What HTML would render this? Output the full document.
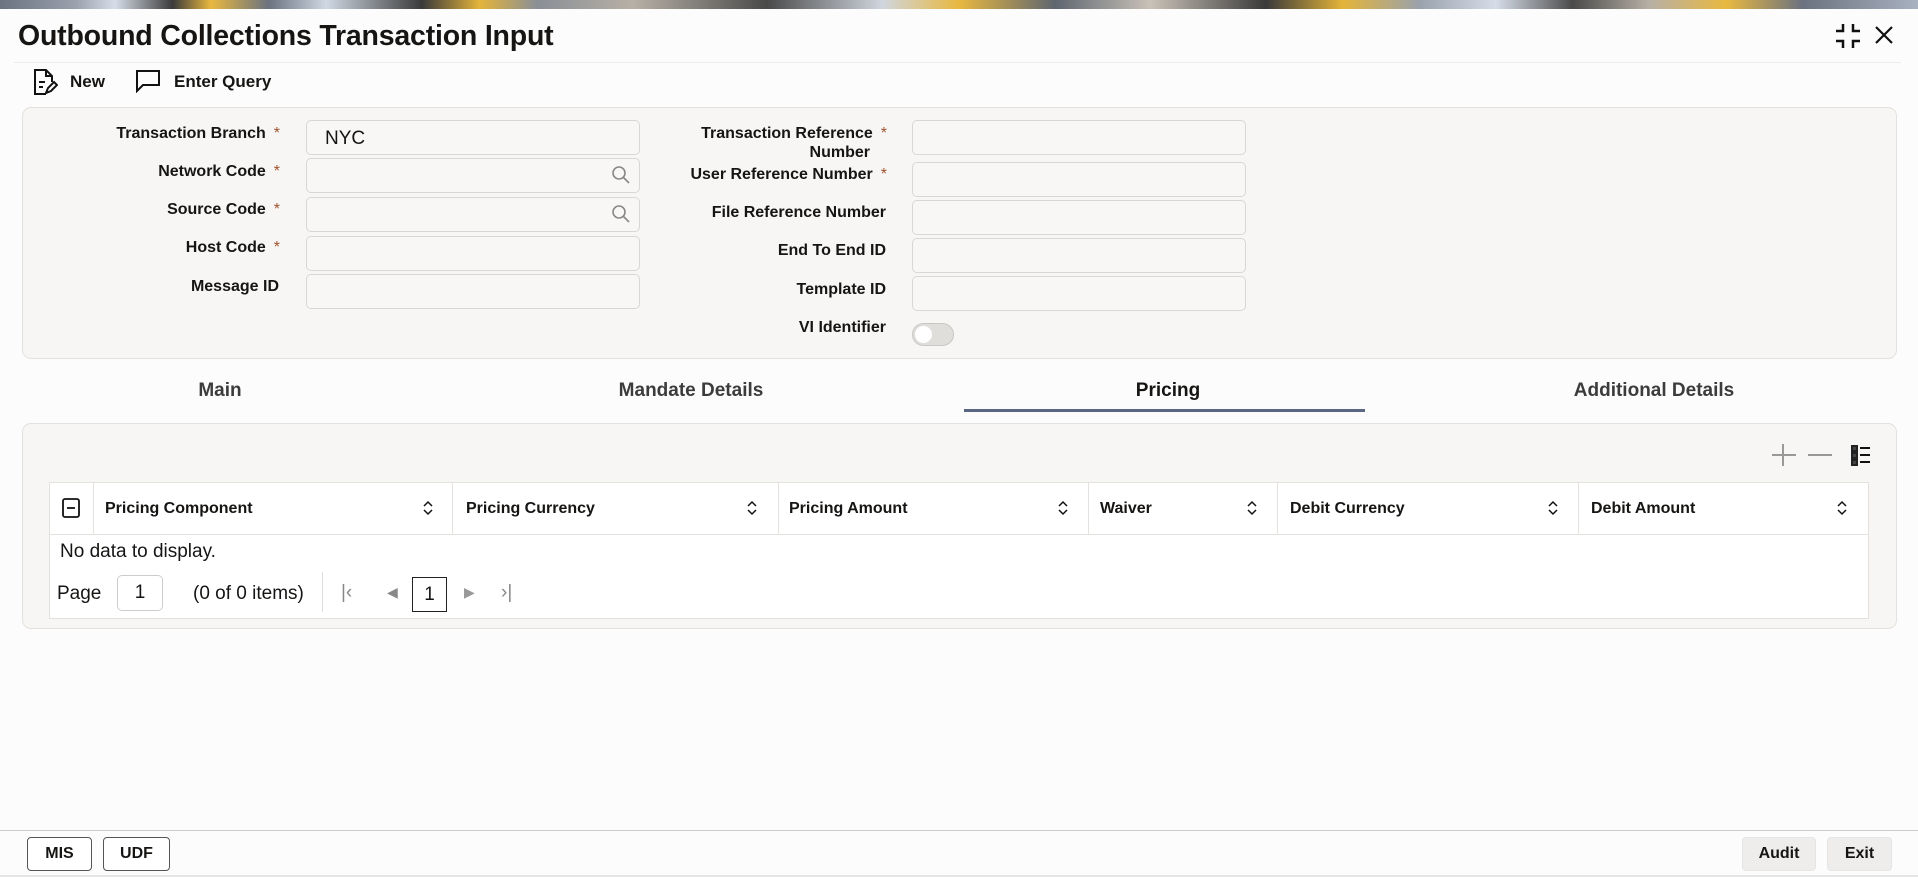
<!DOCTYPE html>
<html><head><meta charset="utf-8">
<style>
*{box-sizing:border-box;margin:0;padding:0}
body{width:1918px;height:877px;overflow:hidden;background:#fcfcfc;font-family:"Liberation Sans",sans-serif;color:#161513;position:relative}
.abs{position:absolute}
.banner{left:0;top:0;width:1918px;height:9px;background:linear-gradient(90deg,#6b7280 0%,#9ca3af 4%,#d6dde8 6%,#3b3b3b 9%,#e8b840 11%,#6b7280 14%,#cfd8e3 17%,#3a3a3a 22%,#e4b43a 25%,#8a8f96 28%,#b7b0a6 33%,#4a4a4a 40%,#d0d6de 46%,#e8b840 50%,#5f6670 55%,#c9c2b8 60%,#3a3a3a 66%,#e4b43a 70%,#9aa2ad 74%,#d6dde8 78%,#4a4a4a 82%,#b7b0a6 86%,#e8b840 90%,#6b7280 94%,#a9b2c0 100%)}
h1{position:absolute;left:18px;top:20px;font-size:28.5px;font-weight:bold;letter-spacing:-0.2px}
.lbl{position:absolute;font-size:16px;font-weight:bold;text-align:right;color:#161513}
.ast{color:#a0522d;font-weight:normal;margin-left:8px}
.inp{position:absolute;height:35px;background:#f8f7f5;border:1px solid #d9d7d3;border-radius:5px}
.panel{position:absolute;background:#f7f6f4;border:1px solid #e4e2de;border-radius:9px}
.tab{position:absolute;top:380px;font-size:19px;font-weight:bold;color:#3c3c3c;transform:translateX(-50%)}
.th{position:absolute;top:482px;height:52px;font-size:16px;font-weight:bold;padding-top:18px;border-left:1px solid #e4e2de}
.btn{position:absolute;top:837px;height:34px;border:1px solid #555;border-radius:4px;font-size:16px;font-weight:bold;text-align:center;line-height:32px;background:#fff}
</style></head><body>
<div class="abs banner"></div>
<h1>Outbound Collections Transaction Input</h1>
<svg class="abs" style="left:1834px;top:22px" width="28" height="28" viewBox="0 0 28 28" fill="none" stroke="#111" stroke-width="2.5"><path d="M2 9h7V2M19 2v7h7M2 19h7v7M19 26v-7h7"/></svg>
<svg class="abs" style="left:1874px;top:25px" width="20" height="20" viewBox="0 0 20 20" stroke="#111" stroke-width="2.2"><path d="M2 2L18 18M18 2L2 18"/></svg>
<div class="abs" style="left:14px;top:62px;width:1887px;height:1px;background:#ececec"></div>
<svg class="abs" style="left:32px;top:68px" width="26" height="28" viewBox="0 0 26 28" fill="none" stroke="#111" stroke-width="2"><path d="M14 26H3V2h11l6 6v6M14 2v6h6M7 14h6M7 19h4"/><path d="M14 25l2-5 6-6 3 3-6 6z"/></svg>
<div class="abs" style="left:70px;top:72px;font-size:17px;font-weight:bold">New</div>
<svg class="abs" style="left:135px;top:69px" width="26" height="24" viewBox="0 0 26 24" fill="none" stroke="#111" stroke-width="2"><path d="M2 2h22v14H8l-6 6z"/></svg>
<div class="abs" style="left:174px;top:72px;font-size:17px;font-weight:bold">Enter Query</div>

<div class="panel" style="left:22px;top:107px;width:1875px;height:252px"></div>
<div class="lbl" style="left:60px;width:220px;top:125px">Transaction Branch<span class="ast">*</span></div>
<div class="lbl" style="left:60px;width:220px;top:163px">Network Code<span class="ast">*</span></div>
<div class="lbl" style="left:60px;width:220px;top:201px">Source Code<span class="ast">*</span></div>
<div class="lbl" style="left:60px;width:220px;top:239px">Host Code<span class="ast">*</span></div>
<div class="lbl" style="left:60px;width:219px;top:278px">Message ID</div>
<div class="inp" style="left:306px;top:120px;width:334px"></div>
<div class="abs" style="left:325px;top:128px;font-size:19px">NYC</div>
<div class="inp" style="left:306px;top:158px;width:334px"></div>
<div class="inp" style="left:306px;top:197px;width:334px"></div>
<div class="inp" style="left:306px;top:236px;width:334px"></div>
<div class="inp" style="left:306px;top:274px;width:334px"></div>
<svg class="abs" style="left:611px;top:165px" width="20" height="20" viewBox="0 0 20 20" fill="none" stroke="#888" stroke-width="1.6"><circle cx="8" cy="8" r="6"/><path d="M12.5 12.5L18 18"/></svg>
<svg class="abs" style="left:611px;top:204px" width="20" height="20" viewBox="0 0 20 20" fill="none" stroke="#888" stroke-width="1.6"><circle cx="8" cy="8" r="6"/><path d="M12.5 12.5L18 18"/></svg>

<div class="lbl" style="left:640px;width:247px;top:124px;line-height:19px">Transaction Reference<span class="ast">*</span><br><span style="margin-right:17px">Number</span></div>
<div class="lbl" style="left:640px;width:247px;top:166px">User Reference Number<span class="ast">*</span></div>
<div class="lbl" style="left:640px;width:246px;top:204px">File Reference Number</div>
<div class="lbl" style="left:640px;width:246px;top:242px">End To End ID</div>
<div class="lbl" style="left:640px;width:246px;top:281px">Template ID</div>
<div class="lbl" style="left:640px;width:246px;top:319px">VI Identifier</div>
<div class="inp" style="left:912px;top:120px;width:334px"></div>
<div class="inp" style="left:912px;top:162px;width:334px"></div>
<div class="inp" style="left:912px;top:200px;width:334px"></div>
<div class="inp" style="left:912px;top:238px;width:334px"></div>
<div class="inp" style="left:912px;top:276px;width:334px"></div>
<div class="abs" style="left:912px;top:323px;width:42px;height:23px;border-radius:12px;background:#e0dedb;border:1px solid #c9c7c3"><div style="position:absolute;left:2px;top:2px;width:17px;height:17px;border-radius:50%;background:#fff"></div></div>

<div class="tab" style="left:220px">Main</div>
<div class="tab" style="left:691px">Mandate Details</div>
<div class="tab" style="left:1168px;color:#161513">Pricing</div>
<div class="tab" style="left:1654px">Additional Details</div>
<div class="abs" style="left:964px;top:409px;width:401px;height:3px;background:#5b6683"></div>

<div class="panel" style="left:22px;top:423px;width:1875px;height:206px"></div>
<svg class="abs" style="left:1770px;top:443px" width="100" height="24" viewBox="0 0 100 24" fill="none" stroke-width="2"><path d="M13 1v22M2 12h24M38 12h24" stroke="#999"/><rect x="82" y="3" width="5" height="5" stroke="#222" fill="#444"/><rect x="82" y="10" width="5" height="5" stroke="#222" fill="#444"/><rect x="82" y="17" width="5" height="5" stroke="#222" fill="#444"/><path d="M90 5h10M90 12h10M90 19h10" stroke="#111"/></svg>
<div class="abs" style="left:49px;top:482px;width:1820px;height:137px;background:#fff;border:1px solid #e4e2de"></div>
<div class="abs" style="left:49px;top:534px;width:1820px;height:1px;background:#e4e2de"></div>
<svg class="abs" style="left:62px;top:498px" width="18" height="20" viewBox="0 0 18 20" fill="none" stroke="#111" stroke-width="1.8"><rect x="1" y="1" width="16" height="18" rx="2"/><path d="M5 10h8"/></svg>
<div class="th" style="left:93px;width:359px;padding-left:11px">Pricing Component</div>
<div class="th" style="left:452px;width:326px;padding-left:13px">Pricing Currency</div>
<div class="th" style="left:778px;width:310px;padding-left:10px">Pricing Amount</div>
<div class="th" style="left:1088px;width:189px;padding-left:11px">Waiver</div>
<div class="th" style="left:1277px;width:301px;padding-left:12px">Debit Currency</div>
<div class="th" style="left:1578px;width:291px;padding-left:12px">Debit Amount</div>
<svg class="abs" style="left:423px;top:500px" width="10" height="16" viewBox="0 0 10 16" fill="none" stroke="#111" stroke-width="1.5"><path d="M1 6l4-4 4 4M1 10l4 4 4-4"/></svg>
<svg class="abs" style="left:747px;top:500px" width="10" height="16" viewBox="0 0 10 16" fill="none" stroke="#111" stroke-width="1.5"><path d="M1 6l4-4 4 4M1 10l4 4 4-4"/></svg>
<svg class="abs" style="left:1058px;top:500px" width="10" height="16" viewBox="0 0 10 16" fill="none" stroke="#111" stroke-width="1.5"><path d="M1 6l4-4 4 4M1 10l4 4 4-4"/></svg>
<svg class="abs" style="left:1247px;top:500px" width="10" height="16" viewBox="0 0 10 16" fill="none" stroke="#111" stroke-width="1.5"><path d="M1 6l4-4 4 4M1 10l4 4 4-4"/></svg>
<svg class="abs" style="left:1548px;top:500px" width="10" height="16" viewBox="0 0 10 16" fill="none" stroke="#111" stroke-width="1.5"><path d="M1 6l4-4 4 4M1 10l4 4 4-4"/></svg>
<svg class="abs" style="left:1837px;top:500px" width="10" height="16" viewBox="0 0 10 16" fill="none" stroke="#111" stroke-width="1.5"><path d="M1 6l4-4 4 4M1 10l4 4 4-4"/></svg>
<div class="abs" style="left:60px;top:541px;font-size:19px">No data to display.</div>
<div class="abs" style="left:57px;top:583px;font-size:19px">Page</div>
<div class="abs" style="left:117px;top:575px;width:46px;height:36px;border:1px solid #ccc;border-radius:5px;font-size:19px;text-align:center;line-height:34px;background:#fff">1</div>
<div class="abs" style="left:193px;top:583px;font-size:19px">(0 of 0 items)</div>
<div class="abs" style="left:322px;top:572px;width:1px;height:40px;background:#ddd"></div>
<div class="abs" style="left:341px;top:582px;font-size:19px;color:#888">|&lsaquo;</div>
<div class="abs" style="left:387px;top:584px;font-size:14px;color:#888">&#9664;</div>
<div class="abs" style="left:412px;top:577px;width:35px;height:35px;border:1.5px solid #222;font-size:19px;text-align:center;line-height:33px">1</div>
<div class="abs" style="left:464px;top:584px;font-size:14px;color:#999">&#9654;</div>
<div class="abs" style="left:501px;top:582px;font-size:19px;color:#888">&rsaquo;|</div>

<div class="abs" style="left:0;top:830px;width:1918px;height:1px;background:#ccc"></div>
<div class="abs" style="left:0;top:875px;width:1918px;height:2px;background:#e5e5e5"></div>
<div class="btn" style="left:27px;width:65px">MIS</div>
<div class="btn" style="left:103px;width:67px">UDF</div>
<div class="btn" style="left:1742px;width:74px;border-color:#e5e5e5;background:#eeedeb">Audit</div>
<div class="btn" style="left:1827px;width:65px;border-color:#e5e5e5;background:#eeedeb">Exit</div>
</body></html>
